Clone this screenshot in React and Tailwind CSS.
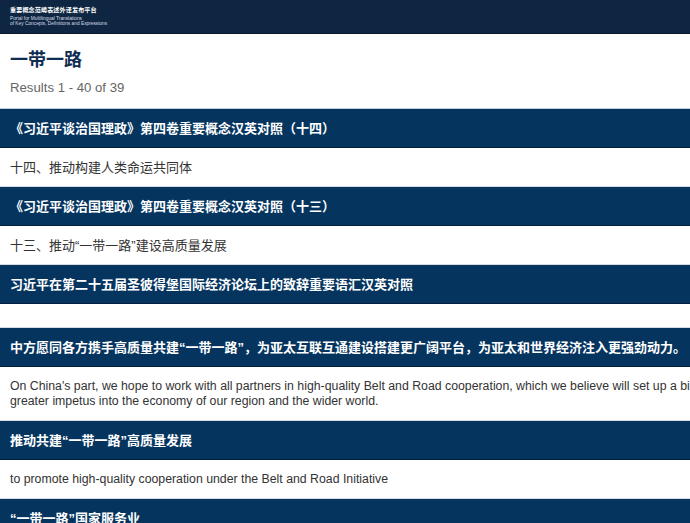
import React from "react";

const font = { fontFamily: '"Liberation Sans", Arial, "Noto Sans CJK SC", sans-serif' };

function Dark({ children }) {
  return (
    <div className="bg-[#05355f] border-b border-[#011f3c] px-[10px] pt-3 pb-[11px] text-[13px] leading-[15px] font-bold text-white whitespace-nowrap">
      {children}
    </div>
  );
}

function Light({ children, en }) {
  return (
    <div
      className={
        "bg-white border-b border-[#d5dbe3] px-[10px] pt-3 pb-[11px] leading-[15px] text-[#333] whitespace-nowrap " +
        (en ? "text-[12.3px]" : "text-[13px]")
      }
    >
      {children}
    </div>
  );
}

export default function App() {
  return (
    <div className="w-[690px] h-[523px] overflow-hidden bg-white" style={font}>
      <div className="h-[34px] bg-[#0e2641] border-b border-[#07182b] px-[10px] pt-[6px]">
        <div className="text-[6.1px] leading-[8px] font-bold text-white tracking-[0.1px]">重要概念范畴表述外译发布平台</div>
        <div className="text-[4.8px] leading-[5px] text-[#d6dde6] mt-[2px]">Portal for Multilingual Translations</div>
        <div className="text-[4.8px] leading-[5px] text-[#d6dde6]">of Key Concepts, Definitions and Expressions</div>
      </div>
      <div className="px-[10px] pt-[14px] pb-[10px]">
        <div className="text-[18px] leading-[24px] font-bold text-[#0f2d52]">一带一路</div>
        <div className="mt-[6px] text-[13.2px] leading-[20px] text-[#666]">Results 1 - 40 of 39</div>
      </div>
      <div className="border-t border-[#c3ccd8]">
        <Dark>《习近平谈治国理政》第四卷重要概念汉英对照（十四）</Dark>
        <Light>十四、推动构建人类命运共同体</Light>
        <Dark>《习近平谈治国理政》第四卷重要概念汉英对照（十三）</Dark>
        <Light>十三、推动“一带一路”建设高质量发展</Light>
        <Dark>习近平在第二十五届圣彼得堡国际经济论坛上的致辞重要语汇汉英对照</Dark>
        <Light></Light>
        <Dark>中方愿同各方携手高质量共建“一带一路”，为亚太互联互通建设搭建更广阔平台，为亚太和世界经济注入更强劲动力。</Dark>
        <Light en>
          On China's part, we hope to work with all partners in high-quality Belt and Road cooperation, which we believe will set up a bigger platform for connectivity in the Asia-Pacific region and inject
          <br />
          greater impetus into the economy of our region and the wider world.
        </Light>
        <Dark>推动共建“一带一路”高质量发展</Dark>
        <Light en>to promote high-quality cooperation under the Belt and Road Initiative</Light>
        <Dark>“一带一路”国家服务业</Dark>
      </div>
    </div>
  );
}
